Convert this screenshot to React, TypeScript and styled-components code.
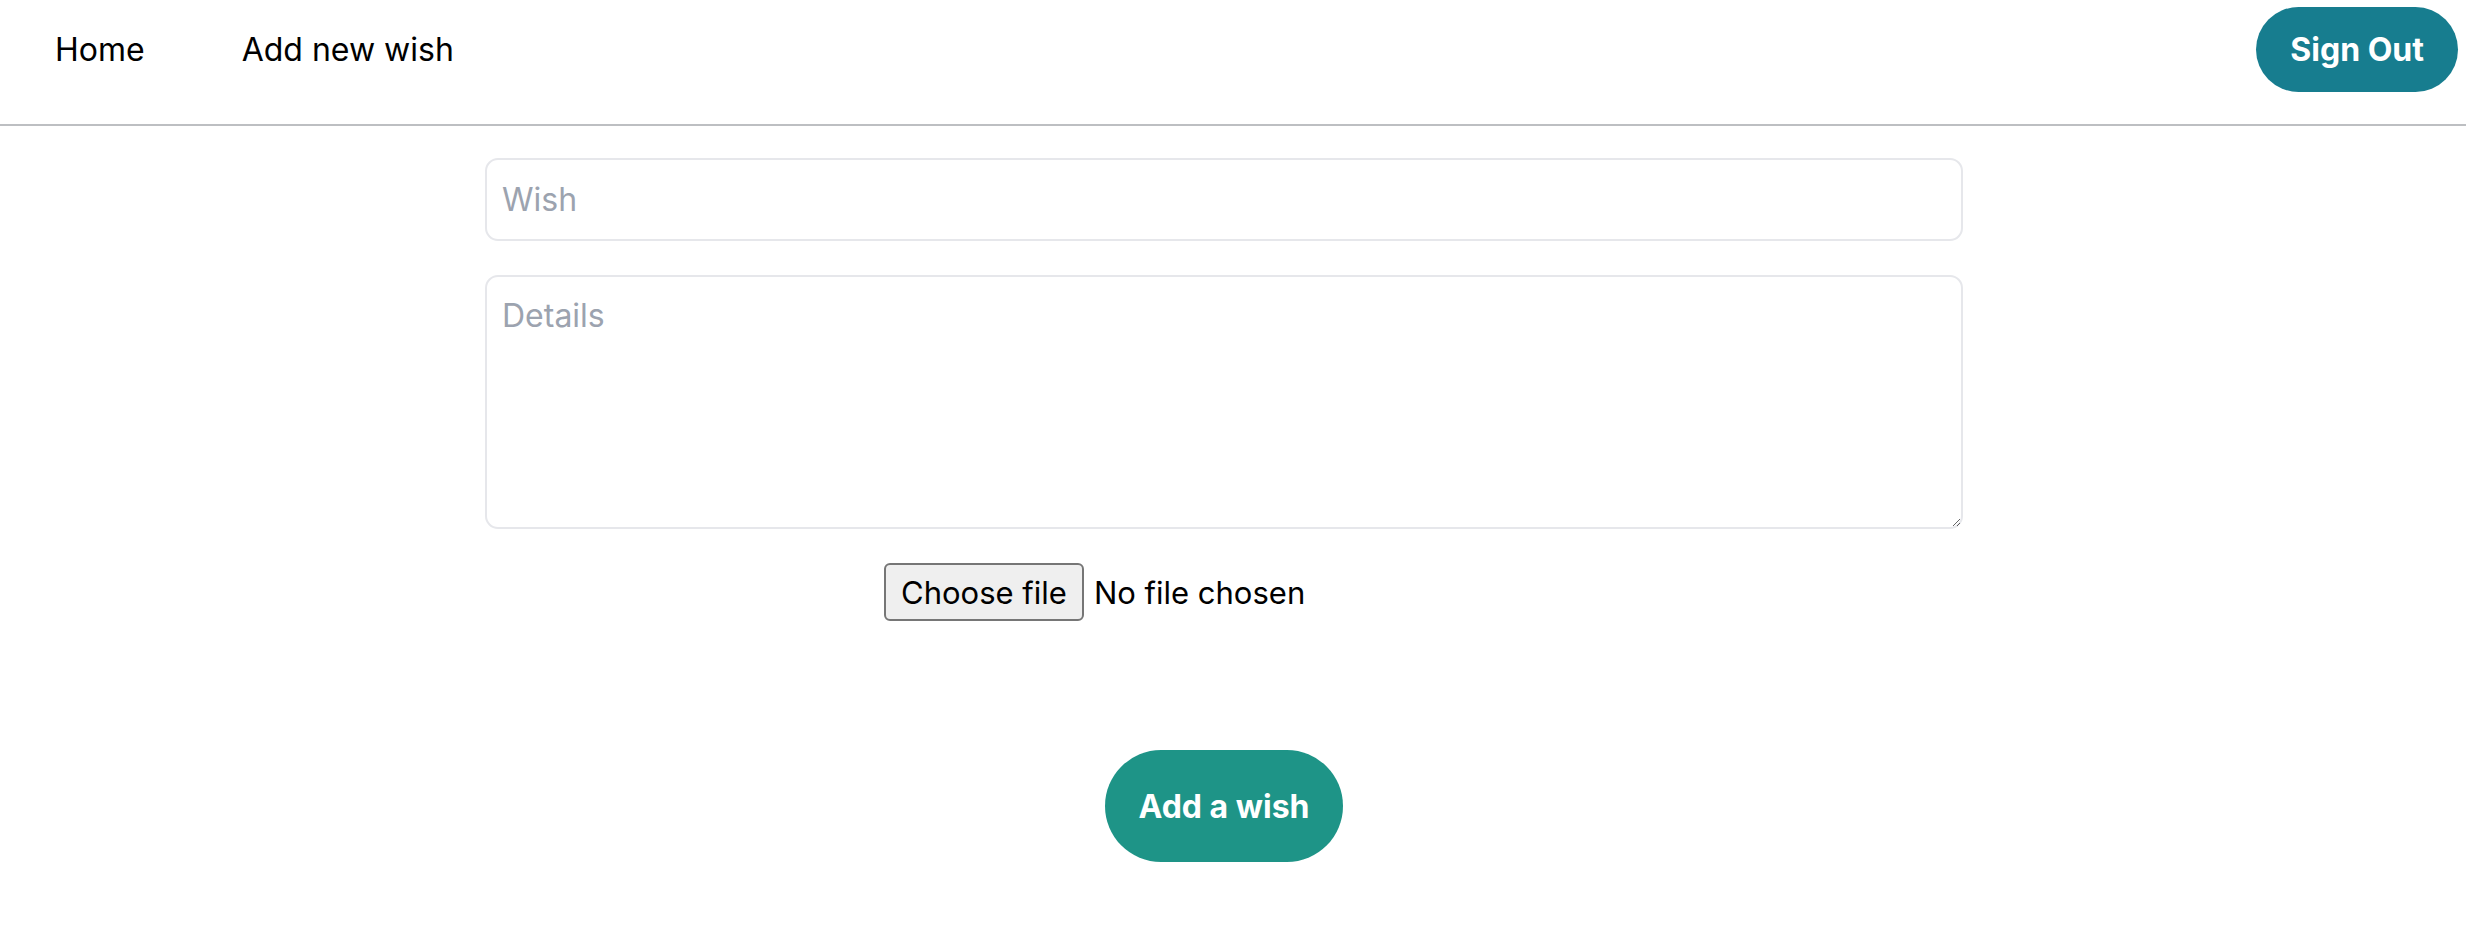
import styled, { createGlobalStyle } from "styled-components";

const GlobalStyle = createGlobalStyle`
	* {
		box-sizing: border-box;
	}
	body {
		margin: 0;
		background: #fff;
		font-family: Inter, "Liberation Sans", Arial, sans-serif;
		color: #000;
	}
`;

const Header = styled.header`
	display: flex;
	align-items: center;
	justify-content: space-between;
	padding: 7px 8px 32px 55px;
	border-bottom: 2px solid #bdbfc2;
`;

const Nav = styled.nav`
	display: flex;
	align-items: center;
	gap: 97px;
`;

const NavLink = styled.a`
	font-size: 32px;
	color: #000;
	text-decoration: none;
	cursor: pointer;
`;

const PillButton = styled.button<{ $bg: string; $height: number }>`
	display: flex;
	align-items: center;
	justify-content: center;
	height: ${(p) => p.$height}px;
	padding: 0 34px;
	border: none;
	border-radius: 999px;
	background: ${(p) => p.$bg};
	color: #fff;
	font-family: Inter, "Liberation Sans", Arial, sans-serif;
	font-weight: 700;
	font-size: 32px;
	cursor: pointer;
`;

const Form = styled.form`
	display: flex;
	flex-direction: column;
	width: 1478px;
	margin: 32px 0 0 485px;
`;

const fieldStyles = `
	width: 100%;
	border: 2px solid #e6e7eb;
	border-radius: 13px;
	font-family: Inter, "Liberation Sans", Arial, sans-serif;
	font-size: 32px;
	color: #111;
	outline: none;
	&::placeholder {
		color: #9ca3af;
	}
`;

const WishInput = styled.input`
	${fieldStyles}
	height: 83px;
	padding: 0 15px;
`;

const DetailsArea = styled.textarea`
	${fieldStyles}
	height: 254px;
	margin-top: 34px;
	padding: 19px 15px;
	resize: both;
`;

const FileRow = styled.label`
	display: flex;
	align-items: center;
	gap: 10px;
	margin: 34px 0 0 399px;
	font-size: 31px;
	cursor: pointer;
`;

const HiddenFile = styled.input`
	display: none;
`;

const FileButton = styled.span`
	display: flex;
	align-items: center;
	height: 58px;
	padding: 0 15px;
	border: 2px solid #767676;
	border-radius: 6px;
	background: #efefef;
	color: #000;
`;

const FileStatus = styled.span`
	color: #000;
`;

const SubmitWrap = styled.div`
	display: flex;
	justify-content: center;
	margin-top: 129px;
`;

function App() {
	return (
		<>
			<GlobalStyle />
			<Header>
				<Nav>
					<NavLink>Home</NavLink>
					<NavLink>Add new wish</NavLink>
				</Nav>
				<PillButton $bg="#177d8f" $height={85}>
					Sign Out
				</PillButton>
			</Header>
			<Form onSubmit={(e) => e.preventDefault()}>
				<WishInput placeholder="Wish" />
				<DetailsArea placeholder="Details" />
				<FileRow>
					<HiddenFile type="file" />
					<FileButton>Choose file</FileButton>
					<FileStatus>No file chosen</FileStatus>
				</FileRow>
				<SubmitWrap>
					<PillButton type="submit" $bg="#1e9487" $height={112}>
						Add a wish
					</PillButton>
				</SubmitWrap>
			</Form>
		</>
	);
}

export default App;
